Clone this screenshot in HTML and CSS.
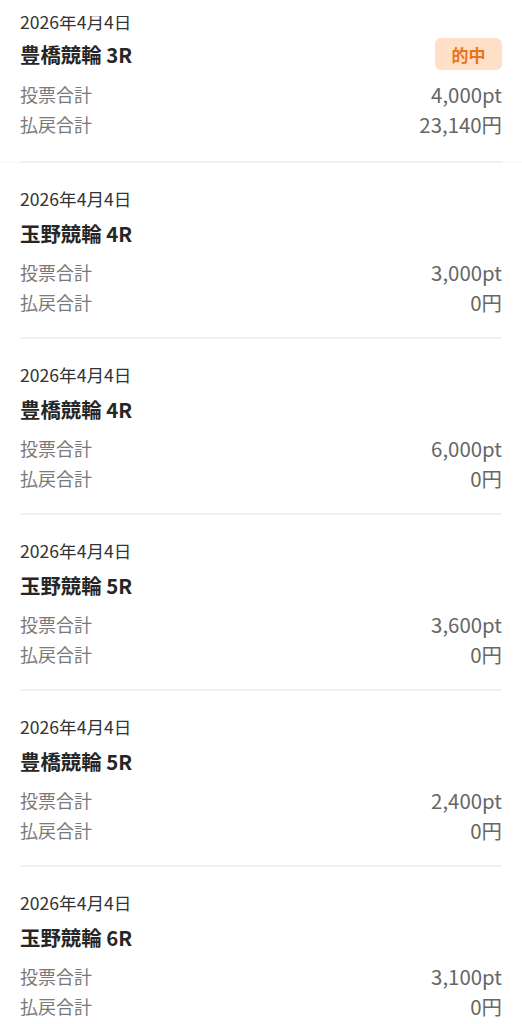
FILE: index.html
```html
<!DOCTYPE html>
<html lang="ja">
<head>
  <meta charset="UTF-8" />
  <meta name="viewport" content="width=device-width, initial-scale=1.0"/>
  <title>投票履歴</title>
  <link rel="stylesheet" href="styles.css">
</head>
<body>
  <div class="top-cover"></div>

  <div class="history">
    <div class="entry entry-top">
      <div class="entry-body">
        <div class="entry-date">2026年4月4日</div>
        <div class="entry-head">
          <h2 class="entry-title">豊橋競輪 3R</h2>
          <span class="badge-hit">的中</span>
        </div>
        <div class="entry-row"><span>投票合計</span><span class="value">4,000pt</span></div>
        <div class="entry-row"><span>払戻合計</span><span class="value">23,140円</span></div>
      </div>
    </div>

    <div class="entry">
      <div class="entry-body">
        <div class="entry-date">2026年4月4日</div>
        <div class="entry-head"><h2 class="entry-title">玉野競輪 4R</h2></div>
        <div class="entry-row"><span>投票合計</span><span class="value">3,000pt</span></div>
        <div class="entry-row"><span>払戻合計</span><span class="value">0円</span></div>
      </div>
    </div>

    <div class="entry">
      <div class="entry-body">
        <div class="entry-date">2026年4月4日</div>
        <div class="entry-head"><h2 class="entry-title">豊橋競輪 4R</h2></div>
        <div class="entry-row"><span>投票合計</span><span class="value">6,000pt</span></div>
        <div class="entry-row"><span>払戻合計</span><span class="value">0円</span></div>
      </div>
    </div>

    <div class="entry">
      <div class="entry-body">
        <div class="entry-date">2026年4月4日</div>
        <div class="entry-head"><h2 class="entry-title">玉野競輪 5R</h2></div>
        <div class="entry-row"><span>投票合計</span><span class="value">3,600pt</span></div>
        <div class="entry-row"><span>払戻合計</span><span class="value">0円</span></div>
      </div>
    </div>

    <div class="entry">
      <div class="entry-body">
        <div class="entry-date">2026年4月4日</div>
        <div class="entry-head"><h2 class="entry-title">豊橋競輪 5R</h2></div>
        <div class="entry-row"><span>投票合計</span><span class="value">2,400pt</span></div>
        <div class="entry-row"><span>払戻合計</span><span class="value">0円</span></div>
      </div>
    </div>

    <div class="entry">
      <div class="entry-body">
        <div class="entry-date">2026年4月4日</div>
        <div class="entry-head"><h2 class="entry-title">玉野競輪 6R</h2></div>
        <div class="entry-row"><span>投票合計</span><span class="value">3,100pt</span></div>
        <div class="entry-row"><span>払戻合計</span><span class="value">0円</span></div>
      </div>
    </div>
  </div>
</body>
</html>
```

FILE: styles.css
```css
:root {
  --text: #2a2a2a;
  --muted: #7a7a7a;
  --value: #666;
  --line: #f0f0f5;
  --hit-bg: #ffdfc8;
  --hit-text: #ea7417;
}

body {
  margin: 0;
  font-family: "Noto Sans CJK JP", "Noto Sans", sans-serif;
  background: #fff;
  color: var(--text);
  overflow: hidden;
}

/* header bianco sopra la lista scrollata */
.top-cover {
  position: fixed;
  top: 0;
  left: 0;
  right: 0;
  height: 16px;
  background: #fff;
  z-index: 10;
}

.history {
  margin-top: -14px;
}

.entry-top {
  border-bottom: 1px solid #f7f7f9;
}

.entry-body {
  margin: 0 20px;
  padding: 24px 0 21px;
  border-bottom: 2px solid var(--line);
}

.entry-top .entry-body {
  padding-bottom: 23px;
  margin-bottom: -1px;
}

.entry-top .entry-head {
  margin-top: 4px;
}

.entry-date {
  font-size: 17.6px;
  line-height: 24px;
  color: #333;
}

.entry-head {
  display: flex;
  align-items: center;
  justify-content: space-between;
  min-height: 28px;
  margin-top: 8px;
}

.entry-title {
  margin: 0;
  font-size: 20.4px;
  line-height: 28px;
  font-weight: 700;
  color: #262626;
}

.badge-hit {
  display: inline-flex;
  align-items: center;
  justify-content: center;
  width: 67px;
  height: 32px;
  border-radius: 6px;
  background: var(--hit-bg);
  color: var(--hit-text);
  font-size: 17px;
  font-weight: 700;
}

.entry-row {
  display: flex;
  justify-content: space-between;
  font-size: 18px;
  line-height: 28px;
  color: var(--muted);
  margin-top: 2px;
}

.entry-head + .entry-row {
  margin-top: 11px;
}

.entry-top .entry-head + .entry-row {
  margin-top: 10px;
}

.entry-row .value {
  font-size: 20.4px;
  color: var(--value);
}
```
